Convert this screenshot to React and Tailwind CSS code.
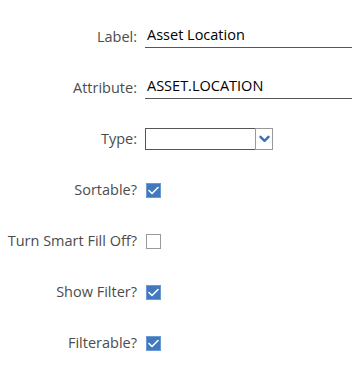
import React from "react";

const Check = ({ checked }) => (
  <span
    className={`w-[15px] h-[15px] flex items-center justify-center ${
      checked ? "bg-[#4178be] border border-[#6b9ad4]" : "bg-white border border-[#9a9a9a]"
    }`}
  >
    {checked && (
      <svg width="11" height="9" viewBox="0 0 11 9" fill="none">
        <path d="M1 4.5l3 3L10 1.5" stroke="white" strokeWidth="1.6" strokeLinecap="round" strokeLinejoin="round" />
      </svg>
    )}
  </span>
);

const Row = ({ label, children }) => (
  <div className="flex items-center h-[51px]">
    <div className="w-[137px] text-right text-[#4c4c4c] text-[14.5px] shrink-0">{label}</div>
    <div className="pl-[8px] flex-1 flex items-center">{children}</div>
  </div>
);

export default function App() {
  const checks = [
    { label: "Sortable?", checked: true },
    { label: "Turn Smart Fill Off?", checked: false },
    { label: "Show Filter?", checked: true },
    { label: "Filterable?", checked: true },
  ];

  return (
    <div className="w-[352px] h-[374px] bg-white pt-[11px]" style={{ fontFamily: "'Open Sans', 'Noto Sans', sans-serif" }}>
      <Row label="Label:">
        <div className="flex-1 h-[23px] border-b border-[#555] pl-[2px] text-[14.5px] text-black leading-[20px] -mt-[1px]">
          Asset Location
        </div>
      </Row>
      <Row label="Attribute:">
        <div className="flex-1 h-[23px] border-b border-[#555] pl-[2px] text-[14.5px] text-black leading-[20px] -mt-[1px]">
          ASSET.LOCATION
        </div>
      </Row>
      <Row label="Type:">
        <div className="flex h-[22px] w-[128px]">
          <div className="flex-1 border border-[#555] border-r-0"></div>
          <div className="w-[18px] border border-[#999] flex items-center justify-center">
            <svg width="11" height="8" viewBox="0 0 11 8" fill="none">
              <path d="M1.5 1.8L5.5 5.8l4-4" stroke="#3f6fb5" strokeWidth="2.4" strokeLinecap="round" strokeLinejoin="round" />
            </svg>
          </div>
        </div>
      </Row>
      {checks.map((c) => (
        <Row key={c.label} label={c.label}>
          <span className="pl-[1px] pt-[1px]">
            <Check checked={c.checked} />
          </span>
        </Row>
      ))}
    </div>
  );
}
